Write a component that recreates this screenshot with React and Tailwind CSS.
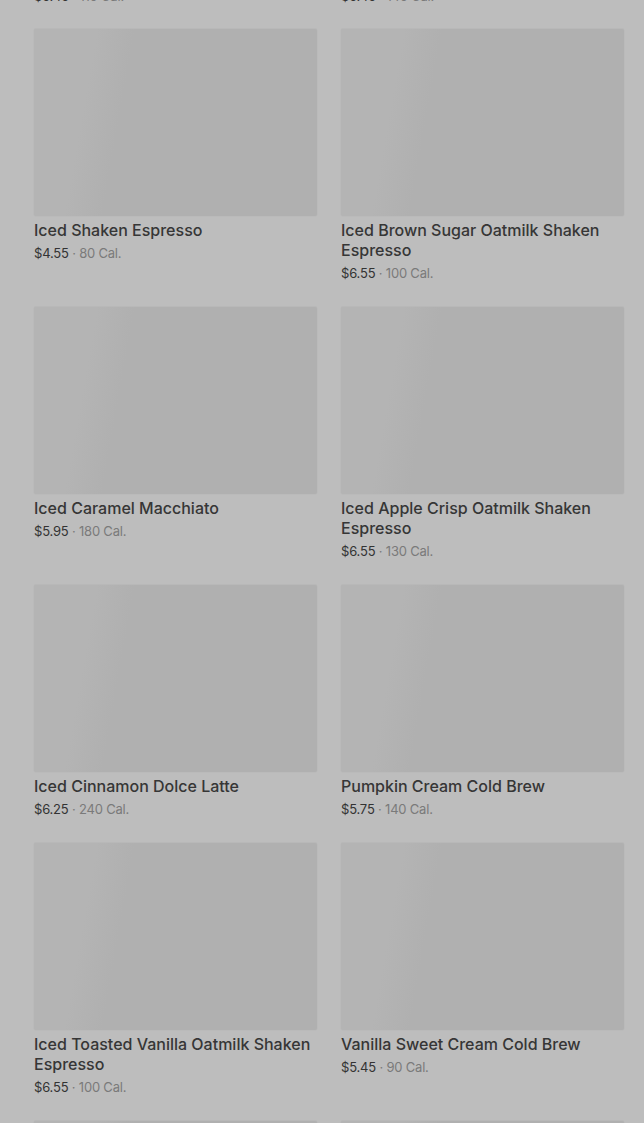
import React from 'react';

const rows = [
  [
    { name: 'Iced Shaken Espresso', price: '$4.55', cal: '80 Cal.' },
    { name: 'Iced Brown Sugar Oatmilk Shaken Espresso', price: '$6.55', cal: '100 Cal.' },
  ],
  [
    { name: 'Iced Caramel Macchiato', price: '$5.95', cal: '180 Cal.' },
    { name: 'Iced Apple Crisp Oatmilk Shaken Espresso', price: '$6.55', cal: '130 Cal.' },
  ],
  [
    { name: 'Iced Cinnamon Dolce Latte', price: '$6.25', cal: '240 Cal.' },
    { name: 'Pumpkin Cream Cold Brew', price: '$5.75', cal: '140 Cal.' },
  ],
  [
    { name: 'Iced Toasted Vanilla Oatmilk Shaken Espresso', price: '$6.55', cal: '100 Cal.' },
    { name: 'Vanilla Sweet Cream Cold Brew', price: '$5.45', cal: '90 Cal.' },
  ],
  [
    { name: 'Iced Pumpkin Cream Chai Tea Latte', price: '$6.45', cal: '300 Cal.' },
    { name: 'Iced White Chocolate Mocha', price: '$6.25', cal: '420 Cal.' },
  ],
];

const Price = ({ price, cal }) => (
  <p className="text-[13px] leading-5 tracking-[-0.2px]">
    <span className="text-[#333]">{price}</span>
    <span className="text-[#7a7a7a]"> · {cal}</span>
  </p>
);

const Card = ({ item }) => (
  <div>
    <div className="h-[187px] rounded-[2px] bg-[#b0b0b0] bg-[linear-gradient(100deg,#b4b4b4_0%,#b4b4b4_20%,#b0b0b0_32%,#b0b0b0_100%)] shadow-[0_-1px_0_#b8b8b8,0_0_2px_rgba(0,0,0,0.06)]" />
    <h3 className="mt-1 text-[16px] leading-5 font-medium text-[#363636]">{item.name}</h3>
    <div className="mt-[3px]">
      <Price price={item.price} cal={item.cal} />
    </div>
  </div>
);

export default function App() {
  return (
    <div className="h-[1123px] overflow-hidden bg-[#bdbdbd] pl-[34px] pr-[20px] font-['Inter','Noto_Sans',sans-serif]">
      {/* previous row, scrolled almost out of view */}
      <div className="grid grid-cols-2 gap-x-6 -mt-[14px] mb-[23px]">
        <Price price="$5.45" cal="110 Cal." />
        <Price price="$5.45" cal="140 Cal." />
      </div>
      <div className="grid grid-cols-2 gap-x-6 gap-y-6">
        {rows.map((row, i) =>
          row.map((item, j) => <Card key={`${i}-${j}`} item={item} />)
        )}
      </div>
    </div>
  );
}
